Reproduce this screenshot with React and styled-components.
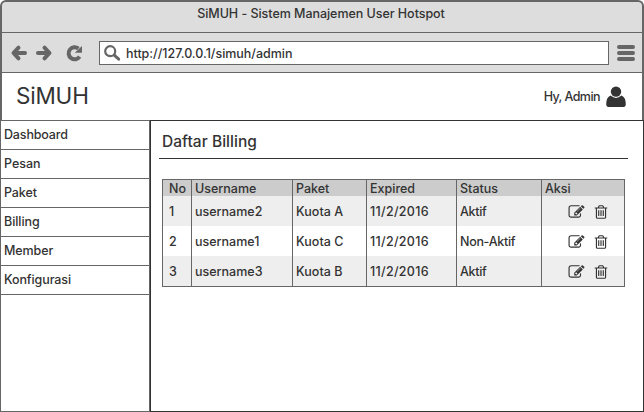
import React from "react";
import styled, { createGlobalStyle } from "styled-components";

const Global = createGlobalStyle`
  * { box-sizing: border-box; }
  body { margin: 0; background: #fff; }
`;

const Window = styled.div`
  width: 644px;
  height: 412px;
  display: flex;
  flex-direction: column;
  font-family: Inter, sans-serif;
  font-size: 12.5px;
  font-weight: 500;
  color: #333;
  white-space: nowrap;
  overflow: hidden;
`;

const Chrome = styled.div`
  height: 120px;
  border: 2px solid #666;
  border-bottom: 0;
  border-radius: 6px 6px 0 0;
  background: #ddd;
  overflow: hidden;
`;

const TitleBar = styled.div`
  height: 31px;
  padding: 4px 2px 0 0;
  line-height: 16px;
  text-align: center;
  border-bottom: 1px solid #666;
`;

const Toolbar = styled.div`
  height: 40px;
  display: flex;
  align-items: center;
  padding: 0 7px 0 8px;
  color: #666;
  border-bottom: 1px solid #666;
`;

const NavIcons = styled.div`
  display: flex;
  width: 89px;
`;

const AddressBar = styled.div`
  width: 510px;
  height: 24px;
  display: flex;
  align-items: center;
  padding-left: 3px;
  gap: 5px;
  background: #fff;
  border: 1px solid #666;
`;

const MenuIcon = styled.svg`
  margin-left: auto;
`;

const Header = styled.header`
  height: 47px;
  display: flex;
  align-items: center;
  justify-content: space-between;
  padding: 0 16px 0 14px;
  background: #fff;
`;

const Brand = styled.div`
  font-size: 22.5px;
  font-weight: 400;
  line-height: 28px;
  padding-bottom: 1px;
`;

const Account = styled.div`
  display: flex;
  align-items: center;
  gap: 6px;
`;

const Label = styled.span`
  letter-spacing: ${(p) => p.$track || 0}px;
  color: #333;
`;

const Url = styled(Label)`
  padding-top: 2px;
`;

const Body = styled.div`
  height: 292px;
  display: flex;
`;

const Sidebar = styled.nav`
  width: 150px;
  border: 1px solid #666;
`;

const MenuItem = styled.div`
  height: 29px;
  padding-left: 3px;
  line-height: 27px;
  border-bottom: 1px solid #666;
`;

const Main = styled.main`
  flex: 1;
  padding: 0 15px 0 8px;
  border: 1px solid #333;
`;

const Heading = styled.h1`
  height: 38px;
  margin: 0 0 20px;
  padding-left: 3px;
  font-size: 15.5px;
  font-weight: 500;
  line-height: 41px;
  letter-spacing: 0.05px;
  border-bottom: 1px solid #333;
`;

const Table = styled.table`
  width: 463px;
  margin-left: 3px;
  table-layout: fixed;
  border-collapse: separate;
  border-spacing: 0;
  border: 1px solid #666;
`;

const Row = styled.tr`
  height: ${(p) => (p.$head ? 16 : 30)}px;
  background: ${(p) => (p.$head ? "#ccc" : p.$shade ? "#eee" : "#fff")};
`;

const Cell = styled.td`
  padding: 2px 0 0 ${(p) => p.$pad || 3}px;
  line-height: 14px;
  vertical-align: middle;
  border-right: 1px solid #666;
  &:last-child { border-right: 0; }
`;

const Actions = styled.div`
  display: flex;
  align-items: center;
  gap: 8px;
  padding-left: 23px;
`;

const Icon = styled.svg`
  display: block;
  fill: #333;
`;

const paths = {
  edit: "M888 1184l116-116-152-152-116 116v56h96v96h56zm440-720q-16-16-33 1l-350 350q-17 17-1 33t33-1l350-350q17-17 1-33zm80 594v190q0 119-84.5 203.5t-203.5 84.5h-832q-119 0-203.5-84.5t-84.5-203.5v-832q0-119 84.5-203.5t203.5-84.5h832q63 0 117 25 15 7 18 23 3 17-9 29l-49 49q-14 14-32 8-23-6-45-6h-832q-66 0-113 47t-47 113v832q0 66 47 113t113 47h832q66 0 113-47t47-113v-126q0-13 9-22l64-64q15-15 35-7t20 29zm-96-738l288 288-672 672h-288v-288zm444 132l-92 92-288-288 92-92q28-28 68-28t68 28l152 152q28 28 28 68t-28 68z",
  trash: "M704 736v576q0 14-9 23t-23 9h-64q-14 0-23-9t-9-23v-576q0-14 9-23t23-9h64q14 0 23 9t9 23zm256 0v576q0 14-9 23t-23 9h-64q-14 0-23-9t-9-23v-576q0-14 9-23t23-9h64q14 0 23 9t9 23zm256 0v576q0 14-9 23t-23 9h-64q-14 0-23-9t-9-23v-576q0-14 9-23t23-9h64q14 0 23 9t9 23zm128 724v-948h-896v948q0 22 7 40.5t14.5 27 10.5 8.5h832q3 0 10.5-8.5t14.5-27 7-40.5zm-672-1076h448l-48-117q-7-9-17-11h-317q-10 2-17 11zm928 32v64q0 14-9 23t-23 9h-96v948q0 83-47 143.5t-113 60.5h-832q-66 0-113-58.5t-47-141.5v-952h-96q-14 0-23-9t-9-23v-64q0-14 9-23t23-9h309l70-167q15-37 54-63t79-26h320q40 0 79 26t54 63l70 167h309q14 0 23 9t9 23z",
};

const menu = [
  { name: "Dashboard", track: -0.15 },
  { name: "Pesan", track: 0 },
  { name: "Paket", track: -0.1 },
  { name: "Billing", track: -0.05 },
  { name: "Member", track: -0.1 },
  { name: "Konfigurasi", track: -0.1 },
];
const columns = [
  { name: "No", width: 29, pad: 6 },
  { name: "Username", width: 101 },
  { name: "Paket", width: 74, track: 0.05 },
  { name: "Expired", width: 90, track: 0.3 },
  { name: "Status", width: 85, track: -0.3 },
  { name: "Aksi", width: 82 },
];
const rows = [
  ["1", "username2", "Kuota A", "11/2/2016", "Aktif"],
  ["2", "username1", "Kuota C", "11/2/2016", "Non-Aktif"],
  ["3", "username3", "Kuota B", "11/2/2016", "Aktif"],
];

export default function App() {
  return (
    <Window>
      <Global />
      <Chrome>
        <TitleBar><Label $track={-0.04}>SiMUH - Sistem Manajemen User Hotspot</Label></TitleBar>
        <Toolbar>
          <NavIcons>
            <svg width="80" height="20" viewBox="0 0 80 20" fill="none" stroke="#666" strokeWidth="4" strokeLinejoin="round">
              <path d="M8.5 4.6L3.5 10L8.5 15.4M4 10H15" strokeLinecap="round" />
              <path d="M34.5 4.6L39.5 10L34.5 15.4M39 10H28" strokeLinecap="round" />
              <path d="M69.6 13.6A6 6 0 1 1 68.4 5.6" strokeWidth="4" />
              <path d="M72 3V9.7H64.8Z" fill="#666" stroke="none" />
            </svg>
          </NavIcons>
          <AddressBar>
            <svg width="18" height="18" viewBox="0 0 18 18" fill="none" stroke="#666">
              <circle cx="7.2" cy="7.2" r="5" strokeWidth="2.2" />
              <path d="M11.2 11.2L15.7 15.2" strokeWidth="3" strokeLinecap="round" />
            </svg>
            <Url $track={-0.02}>http://127.0.0.1/simuh/admin</Url>
          </AddressBar>
          <MenuIcon width="18" height="18" viewBox="0 0 18 18">
            <path d="M2 3H16M2 9H16M2 15H16" stroke="#666" strokeWidth="4" strokeLinecap="round" />
          </MenuIcon>
        </Toolbar>
        <Header>
          <Brand><Label $track={-0.2}>SiMUH</Label></Brand>
          <Account>
            <Label $track={-0.55}>Hy, Admin</Label>
            <Icon width="20" height="22" viewBox="0 0 20 22">
              <circle cx="10" cy="5.6" r="5.2" />
              <path d="M4.6 9.6Q10 14.4 15.4 9.6Q19.8 11.4 19.8 18.2Q19.8 21 16.8 21H3.2Q.2 21 .2 18.2Q.2 11.4 4.6 9.6Z" />
            </Icon>
          </Account>
        </Header>
      </Chrome>
      <Body>
        <Sidebar>
          {menu.map((m) => <MenuItem key={m.name}><Label $track={m.track}>{m.name}</Label></MenuItem>)}
        </Sidebar>
        <Main>
          <Heading>Daftar Billing</Heading>
          <Table>
            <colgroup>{columns.map((c) => <col key={c.name} width={c.width} />)}</colgroup>
            <tbody>
              <Row $head>
                {columns.map((c) => <Cell key={c.name} $pad={c.pad}><Label>{c.name}</Label></Cell>)}
              </Row>
              {rows.map((r, i) => (
                <Row key={r[0]} $shade={i % 2 === 0}>
                  {r.map((v, j) => <Cell key={columns[j].name} $pad={columns[j].pad}><Label $track={columns[j].track}>{v}</Label></Cell>)}
                  <Cell>
                    <Actions>
                      <Icon width="17" height="16" viewBox="0 0 1792 1792"><path d={paths.edit} /></Icon>
                      <Icon width="16" height="16" viewBox="0 0 1792 1792"><path d={paths.trash} /></Icon>
                    </Actions>
                  </Cell>
                </Row>
              ))}
            </tbody>
          </Table>
        </Main>
      </Body>
    </Window>
  );
}
